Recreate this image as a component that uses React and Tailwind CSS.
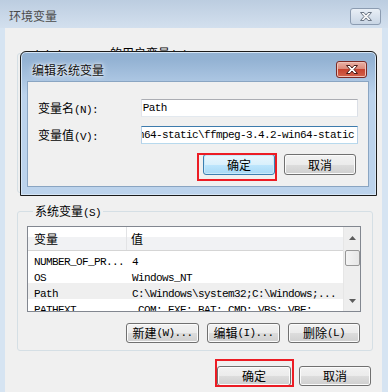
import React from "react";

const CJK_RE = /([\u3000-\u9fff\uff00-\uffef]+)/;

function T({ s }) {
  return s
    .split(CJK_RE)
    .filter(Boolean)
    .map((p, i) =>
      CJK_RE.test(p) ? (
        <span key={i} className="font-['Noto_Sans_CJK_SC',sans-serif] text-[12px] tracking-normal">
          {p}
        </span>
      ) : (
        <span key={i} className="font-['Liberation_Mono',monospace] text-[11px] tracking-[-0.6px]">
          {p}
        </span>
      )
    );
}

function XGlyph({ fill, stroke }) {
  return (
    <svg width="14" height="11" viewBox="0 0 14 11">
      <path
        d="M1.5 1.5 H5 L7 4 L9 1.5 H12.5 L9 5.5 L12.5 9.5 H9 L7 7 L5 9.5 H1.5 L5 5.5 Z"
        fill={fill}
        stroke={stroke}
        strokeWidth="1"
        strokeLinejoin="round"
      />
    </svg>
  );
}

function Btn({ children, className, primary }) {
  return (
    <div
      className={
        "flex items-center justify-center rounded-[3px] border leading-none text-black " +
        (primary
          ? "border-[#3c7fb1] bg-[linear-gradient(#eaf6fd,#d9f0fc_50%,#bee6fd_50%,#a7d9f5)] shadow-[inset_0_0_0_1px_#cbe9f9] "
          : "border-[#707070] bg-[linear-gradient(#f2f2f2,#ebebeb_50%,#dddddd_50%,#cfcfcf)] shadow-[inset_0_0_0_1px_#fbfbfb] ") +
        className
      }
    >
      <T s={children} />
    </div>
  );
}

const rows = [
  ["NUMBER_OF_PR...", "4", false],
  ["OS", "Windows_NT", false],
  ["Path", "C:\\Windows\\system32;C:\\Windows;...", true],
  ["PATHEXT", ".COM;.EXE;.BAT;.CMD;.VBS;.VBE;", false],
];

export default function App() {
  return (
    <div className="relative flex h-[392px] w-[388px] flex-col overflow-hidden bg-[#d8e5f2] text-black">
      {/* outer title bar */}
      <div className="flex h-[28px] shrink-0 items-start justify-between bg-linear-to-b from-[#bccde0] to-[#d3e0ee] pl-[9px] pr-[7px]">
        <div className="mt-[8px] font-['Noto_Sans_CJK_SC',sans-serif] text-[12px] leading-[16px] text-[#4a4a4a]">
          环境变量
        </div>
        <div className="mt-[8px] flex h-[17px] w-[31px] items-center justify-center rounded-[3px] border border-[#8c9cb1] bg-linear-to-b from-[#e9eff6] to-[#c9d6e5]">
          <XGlyph fill="#f4f4f4" stroke="#6c7786" />
        </div>
      </div>

      {/* outer body */}
      <div className="flex flex-1">
        <div className="w-[5px] bg-[#d6e4f2]" />
        <div className="flex w-[377px] flex-col bg-[#f0f0f0]">
          <fieldset className="ml-[12px] mt-[16px] h-[149px] w-[356px] rounded-[3px] border border-[#d5dfe5]">
            <legend className="ml-[6px] px-[2px] leading-[16px]">
              <T s="Administrator 的用户变量(U)" />
            </legend>
          </fieldset>

          <fieldset className="ml-[12px] mt-[9px] h-[149px] w-[356px] rounded-[3px] border border-[#d5dfe5] pl-[9px] pt-[5px]">
            <legend className="ml-[6px] px-[2px] leading-[16px]">
              <T s="系统变量(S)" />
            </legend>

            {/* list */}
            <div className="flex h-[86px] w-[334px] border border-[#828790] bg-white">
              <div className="flex flex-1 flex-col overflow-hidden">
                <div className="flex h-[24px] shrink-0 border-b border-[#d5d5d5] bg-[linear-gradient(#ffffff,#ffffff_42%,#f1f2f4_42%,#f1f2f4)] leading-[23px]">
                  <div className="w-[99px] border-r border-[#e2e3e5] pl-[6px]">
                    <T s="变量" />
                  </div>
                  <div className="pl-[4px]">
                    <T s="值" />
                  </div>
                </div>
                {rows.map(([k, v, sel]) => (
                  <div
                    key={k}
                    className={
                      "flex h-[16px] shrink-0 whitespace-nowrap leading-[16px] " +
                      (sel ? "bg-[#efefef]" : "")
                    }
                  >
                    <div className="w-[100px] pl-[6px]">
                      <T s={k} />
                    </div>
                    <div className="pl-[4px]">
                      <T s={v} />
                    </div>
                  </div>
                ))}
              </div>
              {/* scrollbar */}
              <div className="flex w-[17px] flex-col items-center border-l border-[#e6e6e6] bg-[#eeeeee]">
                <div className="flex h-[18px] items-end justify-center pb-[5px]">
                  <svg width="7" height="4" viewBox="0 0 7 4">
                    <path d="M0 4 L3.5 0 L7 4 Z" fill="#5c5c5c" />
                  </svg>
                </div>
                <div className="mt-[5px] h-[16px] w-[15px] rounded-[2px] border border-[#979797] bg-[linear-gradient(90deg,#f4f4f4,#e6e6e6)]" />
                <div className="flex-1" />
                <div className="flex h-[17px] items-start justify-center pt-[5px]">
                  <svg width="7" height="4" viewBox="0 0 7 4">
                    <path d="M0 0 L7 0 L3.5 4 Z" fill="#5c5c5c" />
                  </svg>
                </div>
              </div>
            </div>

            <div className="mt-[11px] flex w-[334px] justify-end gap-[8px] pr-[1px]">
              <Btn className="h-[20px] w-[73px]">新建(W)...</Btn>
              <Btn className="h-[20px] w-[73px]">编辑(I)...</Btn>
              <Btn className="h-[20px] w-[72px]">删除(L)</Btn>
            </div>
          </fieldset>

          <div className="mt-[15px] flex justify-end gap-[8px] pr-[11px]">
            <Btn className="h-[20px] w-[74px]">确定</Btn>
            <Btn className="h-[20px] w-[72px]">取消</Btn>
          </div>
        </div>
        <div className="flex-1 bg-[#d6e4f2]" />
      </div>

      {/* modal dialog */}
      <div className="absolute left-[20px] top-[51px] flex h-[145px] w-[357px] flex-col rounded-t-[6px] border border-[#1b1b1b] bg-linear-to-b from-[#93b2d3] from-[5%] to-[#bcd3ec] to-[30%] pb-[8px] pl-[6px] pr-[7px] shadow-[inset_0_0_0_1px_#d6e6f6]">
        <div className="flex h-[29px] shrink-0 items-start justify-between">
          <div className="pl-[5px] pt-[10px] font-['Noto_Sans_CJK_SC',sans-serif] text-[12px] leading-[16px] text-[#101010] [text-shadow:0_0_6px_#ffffff,0_0_3px_#ffffff]">
            编辑系统变量
          </div>
          <div className="mr-[2px] mt-[9px] flex h-[17px] w-[31px] items-center justify-center rounded-[3px] border border-[#7b2a25] bg-[linear-gradient(#eab2a6,#dc8b7b_45%,#c7432f_50%,#d2634c)] shadow-[inset_0_0_0_1px_#efc2b8]">
            <XGlyph fill="#ffffff" stroke="#4a1c18" />
          </div>
        </div>
        <div className="flex h-[106px] flex-col border border-[#8aa5c2] bg-[#f0f0f0] pl-[10px] pr-[10px] pt-[17px]">
          <div className="flex h-[18px] items-center">
            <div className="w-[103px] leading-[16px]">
              <T s="变量名(N):" />
            </div>
            <div className="flex h-[18px] w-[218px] items-center border border-[#abadb3] border-b-[#e3e9ef] border-l-[#e2e3ea] border-r-[#dbdfe6] bg-white pl-[1px] leading-[16px]">
              <T s="Path" />
            </div>
          </div>
          <div className="mt-[9px] flex h-[18px] items-center">
            <div className="w-[103px] leading-[16px]">
              <T s="变量值(V):" />
            </div>
            <div className="flex h-[18px] w-[218px] items-center justify-end overflow-hidden whitespace-nowrap border border-[#3d7bad] border-b-[#b7d9ed] border-l-[#b5cfe7] border-r-[#b5cfe7] bg-white pr-[3px] leading-[16px]">
              <T s="in64-static\ffmpeg-3.4.2-win64-static" />
            </div>
          </div>
          <div className="mt-[10px] flex justify-end gap-[9px] pr-[2px]">
            <Btn primary className="h-[21px] w-[72px]">确定</Btn>
            <Btn className="h-[21px] w-[72px]">取消</Btn>
          </div>
        </div>
      </div>

      {/* red annotation boxes */}
      <div className="absolute left-[197px] top-[153px] h-[28px] w-[80px] border-2 border-[#ec1c24]" />
      <div className="absolute left-[215px] top-[359px] h-[28px] w-[79px] border-2 border-[#ec1c24]" />
    </div>
  );
}
